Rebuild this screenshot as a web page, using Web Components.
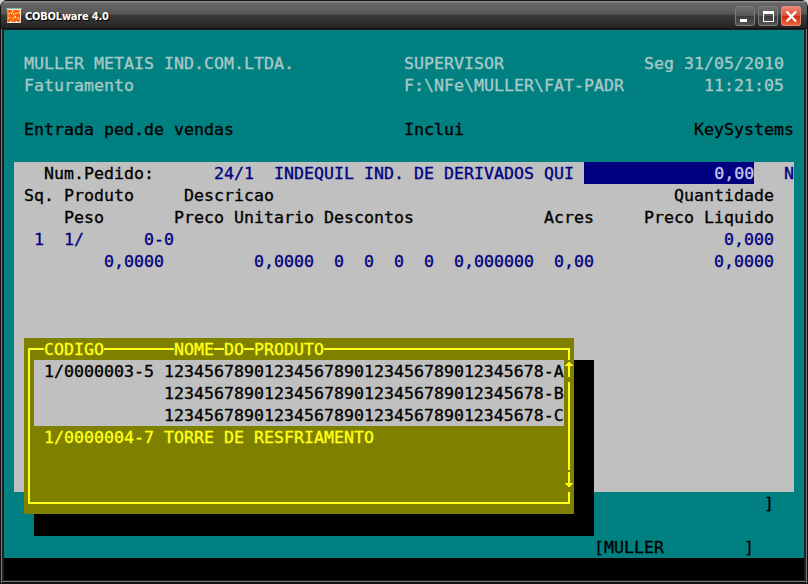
<!DOCTYPE html>
<html lang="pt-BR"><head><meta charset="utf-8"><title>COBOLware 4.0</title>
<style>html,body{margin:0;background:#d5d6dc}body{width:808px;height:584px;overflow:hidden}</style></head>
<body><cobol-window></cobol-window>
<script>
const define=(name,html,setup)=>customElements.define(name,class extends HTMLElement{
  constructor(){super();this.attachShadow({mode:'open'}).innerHTML=html}
  connectedCallback(){setup&&setup(this)}
});
// Text on the terminal grid: at="row,col", optional span in cells and rows.
const place=el=>{
  const [r,c]=el.getAttribute('at').split(',').map(Number);
  const w=+(el.getAttribute('w')||el.textContent.length),h=+(el.getAttribute('h')||1);
  el.style.gridArea=`${r+1}/${c+1}/span ${h}/span ${w}`;
};
define('term-text',`<style>
:host{display:block;box-sizing:border-box;height:22px;padding-top:1px;min-width:0;white-space:pre;font:15.1px/22px "DejaVu Sans Mono","Liberation Mono",monospace;overflow:visible;-webkit-text-stroke:.3px currentColor}
:host([tone=light]){color:#a8c8c8}:host([tone=navy]){color:#000080}:host([tone=yellow]){color:#ffff18}
:host([tone=field]){color:#c8c8ee;background:#000080;text-align:right}
:host([cover]){background:#808000}
span{display:inline-block;transform:scaleX(1.1);transform-origin:0 50%}
:host([tone=field]) span{transform-origin:100% 50%}
</style><span><slot></slot></span>`,place);
define('term-fill',`<style>:host{display:block;background:var(--fill)}</style>`,place);
define('product-list',`<style>
:host{display:grid;position:relative;background:#808000;grid-template:repeat(8,22px)/repeat(55,10px)}
svg{position:absolute;inset:0}
term-text{position:relative}
</style>
<svg width="550" height="176" shape-rendering="crispEdges" fill="#ffff18">
<path d="M4 10H546V22H544V12H6V164H544V154H546V166H4Z"/>
<path d="M544 25H546V39H544ZM544 44H546V132H544ZM544 134H546V146H544Z"/>
<path d="M544 24h2v1h1v1h1v1h1v1h-8v-1h1v-1h1v-1h1ZM541 145h8v1h-1v1h-1v1h-1v1h-2v-1h-1v-1h-1v-1h-1Z"/>
</svg>
<term-fill at="1,1" w="53" h="3" style="--fill:#c0c0c0;position:relative"></term-fill>
<term-text cover tone="yellow" at="0,2">CODIGO</term-text>
<term-text cover tone="yellow" at="0,15">NOME</term-text>
<term-text cover tone="yellow" at="0,20">DO</term-text>
<term-text cover tone="yellow" at="0,23">PRODUTO</term-text>
<term-text at="1,2">1/0000003-5</term-text>
<term-text at="1,14">12345678901234567890123456789012345678-A</term-text>
<term-text at="2,14">12345678901234567890123456789012345678-B</term-text>
<term-text at="3,14">12345678901234567890123456789012345678-C</term-text>
<term-text tone="yellow" at="4,2">1/0000004-7</term-text>
<term-text tone="yellow" at="4,14">TORRE DE RESFRIAMENTO</term-text>`,place);
define('title-bar',`<style>
:host{display:flex;align-items:center;height:29px;box-sizing:border-box;padding:3px 5px 0 5px;border-radius:6px 6px 0 0;
background:linear-gradient(#161616 0 1px,#8a8a8a 1px 2px,#676767 3px,#565656 14px,#3b3b3b 15px,#242424 28px,#111 28px)}
b{font:bold 11px/16px "DejaVu Sans Condensed","DejaVu Sans",sans-serif;font-stretch:condensed;color:#fff;margin-left:3px;padding-top:2px;flex:1;text-shadow:1px 1px 1px #000;letter-spacing:-.2px}
svg{display:block}
</style>
<svg width="16" height="16" viewBox="0 1 16 16" shape-rendering="crispEdges">
<path fill="#78b4b0" d="M0 1h16v1H0z"/><path fill="#ffe0c4" d="M1 2h14v14H1z"/>
<path fill="#f58220" d="M1 3h13v12H1z"/><path fill="#ff5a16" d="M2 3h3v2H2zM8 3h4v2H8zM4 7h4v3H4zM10 7h4v3h-4zM2 12h4v2H2zM8 12h5v2H8z"/>
<path fill="#ffb45e" d="M6 3h1v3H6zM2 6h2v1H2zM9 6h3v1H9zM2 10h1v2H2zM7 10h3v1H7zM12 10h1v2h-1z"/>
<path fill="#fff" d="M5 6h1v1H5zM9 9h1v1H9zM4 14h1v2H4zM10 14h1v2h-1zM7 7h1v1H7zM13 5h1v1h-1z"/></svg>
<b>COBOLware 4.0</b>
<svg width="67" height="20" viewBox="0 0 67 20">
<defs><linearGradient id="g" x2="0" y2="1"><stop stop-color="#707070"/><stop offset=".48" stop-color="#565656"/><stop offset=".52" stop-color="#3c3c3c"/><stop offset="1" stop-color="#555"/></linearGradient>
<linearGradient id="r" x2="0" y2="1"><stop stop-color="#e98a78"/><stop offset=".48" stop-color="#dd5138"/><stop offset=".52" stop-color="#cf2d12"/><stop offset="1" stop-color="#ee6440"/></linearGradient></defs>
<g stroke="#7c7c7c"><rect x=".5" y=".5" width="19" height="19" rx="2" fill="url(#g)"/><rect x="23.500" y=".5" width="19" height="19" rx="2" fill="url(#g)"/><rect x="46.500" y=".5" width="19" height="19" rx="2" fill="url(#r)" stroke="#e88878"/></g>
<path fill="#fff" d="M5 13h7v3H5z"/><path fill="#fff" fill-rule="evenodd" d="M28 5h11v11H28zM29 8v7h9V8z"/>
<path stroke="#fff" stroke-width="2.300" d="M51.500 5.500l9.500 10M61 5.500l-9.500 10"/></svg>`);
define('term-screen',`<style>
:host{display:grid;width:800px;height:550px;grid-template:repeat(25,22px)/repeat(80,10px);background:#008080;color:#000;overflow:hidden}
</style>
<term-fill at="24,0" w="80" style="--fill:#000"></term-fill>
<term-fill at="6,1" w="78" h="15" style="--fill:#c0c0c0"></term-fill>
<term-text tone="light" at="1,2">MULLER METAIS IND.COM.LTDA.</term-text>
<term-text tone="light" at="1,40">SUPERVISOR</term-text>
<term-text tone="light" at="1,64">Seg 31/05/2010</term-text>
<term-text tone="light" at="2,2">Faturamento</term-text>
<term-text tone="light" at="2,40">F:\\NFe\\MULLER\\FAT-PADR</term-text>
<term-text tone="light" at="2,70">11:21:05</term-text>
<term-text at="4,2">Entrada ped.de vendas</term-text>
<term-text at="4,40">Inclui</term-text>
<term-text at="4,69">KeySystems</term-text>
<term-text at="6,4">Num.Pedido:</term-text>
<term-text tone="navy" at="6,21">24/1</term-text>
<term-text tone="navy" at="6,27">INDEQUIL IND. DE DERIVADOS QUI</term-text>
<term-text tone="field" at="6,58" w="17">0,00</term-text>
<term-text tone="navy" at="6,78">N</term-text>
<term-text at="7,2">Sq.</term-text><term-text at="7,6">Produto</term-text>
<term-text at="7,18">Descricao</term-text><term-text at="7,67">Quantidade</term-text>
<term-text at="8,6">Peso</term-text><term-text at="8,17">Preco Unitario</term-text>
<term-text at="8,32">Descontos</term-text><term-text at="8,54">Acres</term-text><term-text at="8,64">Preco Liquido</term-text>
<term-text tone="navy" at="9,3">1</term-text><term-text tone="navy" at="9,6">1/</term-text>
<term-text tone="navy" at="9,14">0-0</term-text><term-text tone="navy" at="9,72">0,000</term-text>
<term-text tone="navy" at="10,10">0,0000</term-text><term-text tone="navy" at="10,25">0,0000</term-text>
<term-text tone="navy" at="10,33">0</term-text><term-text tone="navy" at="10,36">0</term-text>
<term-text tone="navy" at="10,39">0</term-text><term-text tone="navy" at="10,42">0</term-text>
<term-text tone="navy" at="10,45">0,000000</term-text><term-text tone="navy" at="10,55">0,00</term-text>
<term-text tone="navy" at="10,71">0,0000</term-text>
<term-fill at="15,3" w="56" h="8" style="--fill:#000"></term-fill>
<product-list at="14,2" w="55" h="8"></product-list>
<term-text at="21,76">]</term-text>
<term-text at="23,59">[MULLER</term-text><term-text at="23,74">]</term-text>`);
define('cobol-window',`<style>
:host{display:block;box-sizing:border-box;width:808px;height:584px;border-radius:7px 7px 0 0;background:#202020;
border:1px solid #111;border-top:0;box-shadow:inset 1px 0 #777,inset -1px 0 #777,inset 0 -1px #111,inset 0 -2px #777}
title-bar{margin:0 0 1px}term-screen{margin:0 3px}
</style><title-bar></title-bar><term-screen></term-screen>`);
</script></body></html>
